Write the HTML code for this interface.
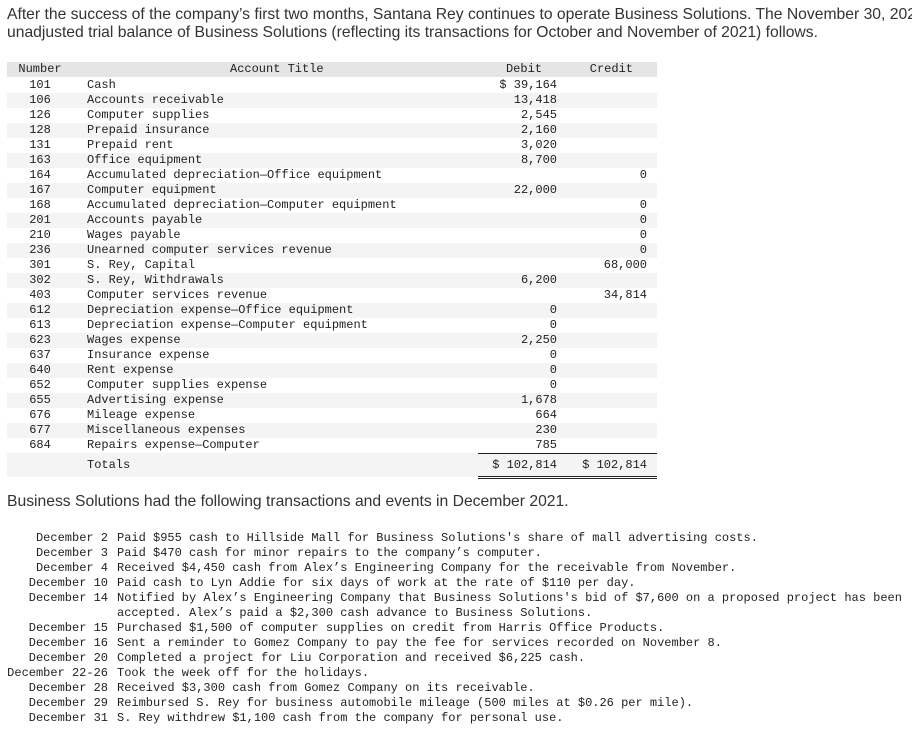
<!DOCTYPE html>
<html><head><style>
body{margin:0;width:912px;height:733px;background:#fff;position:relative;overflow:hidden;color:#222}
.p{position:absolute;left:7px;font-family:"Liberation Sans",sans-serif;font-size:15.7px;color:#333;white-space:nowrap;line-height:18px}
.m{font-family:"Liberation Mono",monospace;font-size:12px;white-space:nowrap}
.r{position:absolute;left:7px;width:650px;height:15px;line-height:15px}
.r span{position:absolute;top:0;white-space:pre}
.n{left:0;width:66px;text-align:center}
.t{left:80px}
.d{right:100px;text-align:right}
.c{right:10px;text-align:right}
.g{background:#f4f4f4}
.h{background:#e5e5e5}
.tx{position:absolute;left:0;top:531px;line-height:15px;font-size:0}
.tx div{height:15px;position:relative;font-size:12px}
.tx b{font-weight:normal;position:absolute;left:0;width:108px;text-align:right;white-space:pre}
.tx i{font-style:normal;position:absolute;left:117px;white-space:pre}
</style></head><body>
<div class="p" style="top:6px">After the success of the company’s first two months, Santana Rey continues to operate Business Solutions. The November 30, 2021</div>
<div class="p" style="top:24px">unadjusted trial balance of Business Solutions (reflecting its transactions for October and November of 2021) follows.</div>

<div class="m">
<div class="r h" style="top:62px"><span class="n">Number</span><span style="left:223px">Account Title</span><span style="right:115px">Debit</span><span style="right:24px">Credit</span></div>
<div class="r" style="top:78px"><span class="n">101</span><span class="t">Cash</span><span class="d">$ 39,164</span></div>
<div class="r g" style="top:93px"><span class="n">106</span><span class="t">Accounts receivable</span><span class="d">13,418</span></div>
<div class="r" style="top:108px"><span class="n">126</span><span class="t">Computer supplies</span><span class="d">2,545</span></div>
<div class="r g" style="top:123px"><span class="n">128</span><span class="t">Prepaid insurance</span><span class="d">2,160</span></div>
<div class="r" style="top:138px"><span class="n">131</span><span class="t">Prepaid rent</span><span class="d">3,020</span></div>
<div class="r g" style="top:153px"><span class="n">163</span><span class="t">Office equipment</span><span class="d">8,700</span></div>
<div class="r" style="top:168px"><span class="n">164</span><span class="t">Accumulated depreciation—Office equipment</span><span class="c">0</span></div>
<div class="r g" style="top:183px"><span class="n">167</span><span class="t">Computer equipment</span><span class="d">22,000</span></div>
<div class="r" style="top:198px"><span class="n">168</span><span class="t">Accumulated depreciation—Computer equipment</span><span class="c">0</span></div>
<div class="r g" style="top:213px"><span class="n">201</span><span class="t">Accounts payable</span><span class="c">0</span></div>
<div class="r" style="top:228px"><span class="n">210</span><span class="t">Wages payable</span><span class="c">0</span></div>
<div class="r g" style="top:243px"><span class="n">236</span><span class="t">Unearned computer services revenue</span><span class="c">0</span></div>
<div class="r" style="top:258px"><span class="n">301</span><span class="t">S. Rey, Capital</span><span class="c">68,000</span></div>
<div class="r g" style="top:273px"><span class="n">302</span><span class="t">S. Rey, Withdrawals</span><span class="d">6,200</span></div>
<div class="r" style="top:288px"><span class="n">403</span><span class="t">Computer services revenue</span><span class="c">34,814</span></div>
<div class="r g" style="top:303px"><span class="n">612</span><span class="t">Depreciation expense—Office equipment</span><span class="d">0</span></div>
<div class="r" style="top:318px"><span class="n">613</span><span class="t">Depreciation expense—Computer equipment</span><span class="d">0</span></div>
<div class="r g" style="top:333px"><span class="n">623</span><span class="t">Wages expense</span><span class="d">2,250</span></div>
<div class="r" style="top:348px"><span class="n">637</span><span class="t">Insurance expense</span><span class="d">0</span></div>
<div class="r g" style="top:363px"><span class="n">640</span><span class="t">Rent expense</span><span class="d">0</span></div>
<div class="r" style="top:378px"><span class="n">652</span><span class="t">Computer supplies expense</span><span class="d">0</span></div>
<div class="r g" style="top:393px"><span class="n">655</span><span class="t">Advertising expense</span><span class="d">1,678</span></div>
<div class="r" style="top:408px"><span class="n">676</span><span class="t">Mileage expense</span><span class="d">664</span></div>
<div class="r g" style="top:423px"><span class="n">677</span><span class="t">Miscellaneous expenses</span><span class="d">230</span></div>
<div class="r" style="top:438px"><span class="n">684</span><span class="t">Repairs expense—Computer</span><span class="d">785</span></div>
<div class="r g" style="top:453px;height:24px;line-height:24px"><span class="t">Totals</span><span class="d">$ 102,814</span><span class="c">$ 102,814</span></div>
<div style="position:absolute;left:478px;top:453px;width:179px;border-top:1px solid #222"></div>
<div style="position:absolute;left:478px;top:476px;width:179px;height:1px;border-top:1px solid #222;border-bottom:1px solid #222"></div>
</div>

<div class="p" style="top:493px">Business Solutions had the following transactions and events in December 2021.</div>

<div class="m tx"><div><b>December 2</b><i>Paid $955 cash to Hillside Mall for Business Solutions's share of mall advertising costs.</i></div><div><b>December 3</b><i>Paid $470 cash for minor repairs to the company’s computer.</i></div><div><b>December 4</b><i>Received $4,450 cash from Alex’s Engineering Company for the receivable from November.</i></div><div><b>December 10</b><i>Paid cash to Lyn Addie for six days of work at the rate of $110 per day.</i></div><div><b>December 14</b><i>Notified by Alex’s Engineering Company that Business Solutions's bid of $7,600 on a proposed project has been</i></div><div><i>accepted. Alex’s paid a $2,300 cash advance to Business Solutions.</i></div><div><b>December 15</b><i>Purchased $1,500 of computer supplies on credit from Harris Office Products.</i></div><div><b>December 16</b><i>Sent a reminder to Gomez Company to pay the fee for services recorded on November 8.</i></div><div><b>December 20</b><i>Completed a project for Liu Corporation and received $6,225 cash.</i></div><div><b>December 22-26</b><i>Took the week off for the holidays.</i></div><div><b>December 28</b><i>Received $3,300 cash from Gomez Company on its receivable.</i></div><div><b>December 29</b><i>Reimbursed S. Rey for business automobile mileage (500 miles at $0.26 per mile).</i></div><div><b>December 31</b><i>S. Rey withdrew $1,100 cash from the company for personal use.</i></div></div>
</body></html>
